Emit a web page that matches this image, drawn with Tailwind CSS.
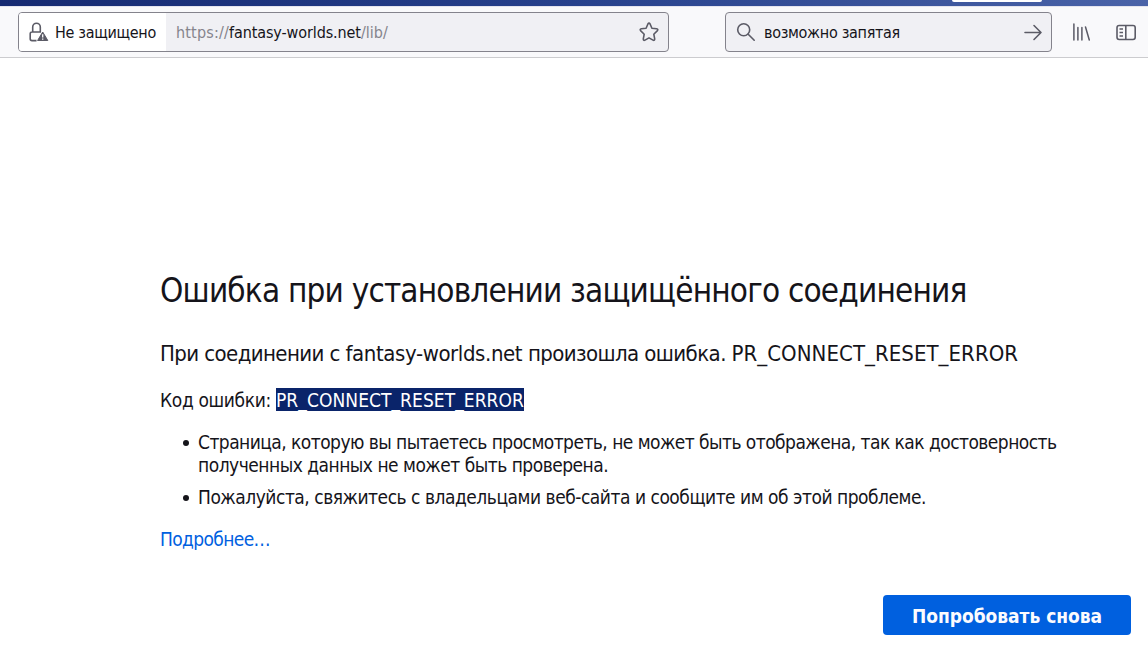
<!DOCTYPE html>
<html lang="ru">
<head>
<meta charset="utf-8">
<title>Ошибка при установлении защищённого соединения</title>
<script src="https://cdn.jsdelivr.net/npm/@tailwindcss/browser@4"></script>
</head>
<body class="h-[666px] overflow-hidden bg-white font-['DejaVu_Sans_Condensed','DejaVu_Sans',sans-serif] text-[#15141a]">
  <!-- Tab strip edge -->
  <div class="flex h-[6px] bg-linear-to-r from-[#162a72] via-[#27418c] to-[#4a63a8]">
    <div class="ml-[952px] h-[2px] w-[90px] rounded-b-[3px] bg-white"></div>
  </div>
  <!-- Toolbar -->
  <header class="flex h-[52px] items-start border-t border-b border-t-[#e4e4ee] border-b-[#cccccf] bg-[#f9f9fb] pt-[5px] pl-[18px] text-[16px]">
    <div class="flex h-10 w-[651px] items-center overflow-hidden rounded-[4px] border border-[#84838c] bg-[#f0f0f4]">
      <div class="flex h-full w-[147px] shrink-0 items-center bg-white pl-[10px]">
        <svg class="mr-[6px] size-5 shrink-0" viewBox="0 0 20 20" fill="none" stroke="#5b5b66" stroke-width="1.6">
          <path d="M7.500 18.600H3a1.800 1.800 0 0 1-1.800-1.800v-5A1.800 1.800 0 0 1 3 10h9M3.700 10V5a3.800 3.800 0 0 1 7.600 0V10"/>
          <path d="M13.700 10 18.800 18.500H8.600z" fill="#5b5b66" stroke-width="1" stroke-linejoin="round"/>
          <path d="M13.700 12.300v3.100M13.700 16.400v1.300" stroke="#fff" stroke-width="1.300"/>
        </svg>
        <span class="pt-px tracking-[-0.3px] whitespace-nowrap">Не защищено</span>
      </div>
      <div class="flex grow pt-px pl-[10px] whitespace-nowrap text-[#85848c]"><span class="tracking-[0.17px]">https://</span><span class="tracking-[-0.1px] text-[#15141a]">fantasy-worlds.net</span><span>/lib/</span></div>
      <svg class="mr-[9px] size-5 shrink-0" viewBox="0 0 20 20" fill="none" stroke="#5b5b66" stroke-width="1.600" stroke-linejoin="round">
        <path d="M8.900 2Q10 .2 11.100 2L12.900 6.200 17.600 6.800Q19.700 7.300 18.200 8.900L14.800 12.200 15.700 16.800Q15.800 19 14 18.100L10 15.900 6 18.100Q4.200 19 4.300 16.800L5.200 12.200 1.800 8.900Q.3 7.300 2.400 6.800L7.100 6.200z"/>
      </svg>
    </div>
    <div class="ml-14 flex h-10 w-[327px] items-center rounded-[4px] border border-[#84838c] bg-[#f0f0f4] pl-[10px]">
      <svg class="mr-2 size-5 shrink-0" viewBox="0 0 20 20" fill="none" stroke="#5b5b66" stroke-width="1.600" stroke-linecap="round">
        <circle cx="7.700" cy="7.700" r="6"/><path d="m12.200 12.200 6 6"/>
      </svg>
      <span class="grow pt-px tracking-[-0.3px] whitespace-nowrap">возможно запятая</span>
      <svg class="mr-[8px] size-5" viewBox="0 0 20 20" fill="none" stroke="#5b5b66" stroke-width="1.600" stroke-linecap="round" stroke-linejoin="round">
        <path d="M2 10.500h16M11 3.500l7 7-7 7"/>
      </svg>
    </div>
    <svg class="mt-[10px] ml-5 size-5" viewBox="0 0 20 20" fill="none" stroke="#5b5b66" stroke-width="1.500" stroke-linecap="round">
      <path d="M1.900 2v16M5.900 5.500v12.500M9.900 5.500v12.500M13.500 5l3.800 13"/>
    </svg>
    <svg class="mt-[10px] ml-6 size-5" viewBox="0 0 20 20" fill="none" stroke="#5b5b66" stroke-width="1.600">
      <rect x="1" y="3.500" width="18.200" height="14" rx="2.200"/><path d="M9.800 3.500v14"/><path d="M3.500 7h3.500M3.500 10.500h3.500M3.500 14h3.500" stroke-width="1.300"/>
    </svg>
  </header>
  <!-- Error page -->
  <main class="pt-[213px] pl-[160px] text-[19px] leading-[23px]">
    <h1 class="h-10 text-[33px] leading-10 tracking-[-0.82px] whitespace-nowrap">Ошибка при установлении защищённого соединения</h1>
    <p class="mt-[29px] text-[22px] leading-7 tracking-[-0.59px] whitespace-nowrap">При соединении с <span class="tracking-[-0.4px]">fantasy-worlds.net</span> произошла ошибка. <span class="tracking-[0.050px]">PR_CONNECT_RESET_ERROR</span></p>
    <p class="mt-[20px] h-6 tracking-[-0.35px] whitespace-nowrap">Код ошибки: <span class="inline-block h-[23px] bg-[#0a246a] pt-px tracking-[0.064px] text-white">PR_CONNECT_RESET_ERROR</span></p>
    <ul class="mt-[19px] tracking-[-0.54px] whitespace-nowrap">
      <li class="flex"><span class="mt-[9px] mr-[9px] ml-[23px] size-[6px] shrink-0 rounded-full bg-[#15141a]"></span><span>Страница, которую вы пытаетесь просмотреть, не может быть отображена, так как достоверность<br><span class="tracking-[-0.5px]">полученных данных не может быть проверена.</span></span></li>
      <li class="mt-[9px] flex"><span class="mt-[9px] mr-[9px] ml-[23px] size-[6px] shrink-0 rounded-full bg-[#15141a]"></span><span class="tracking-[-0.48px]">Пожалуйста, свяжитесь с владельцами веб-сайта и сообщите им об этой проблеме.</span></li>
    </ul>
    <p class="mt-[19px] tracking-[-0.63px]"><a class="text-[#0060df]">Подробнее…</a></p>
    <div class="mt-11 flex justify-end pr-[17px]">
      <button class="h-10 w-[248px] rounded-[4px] bg-[#0060df] pt-[2px] text-[19px] font-bold tracking-[-0.030px] whitespace-nowrap text-[#fbfbfe]">Попробовать снова</button>
    </div>
  </main>
</body>
</html>
